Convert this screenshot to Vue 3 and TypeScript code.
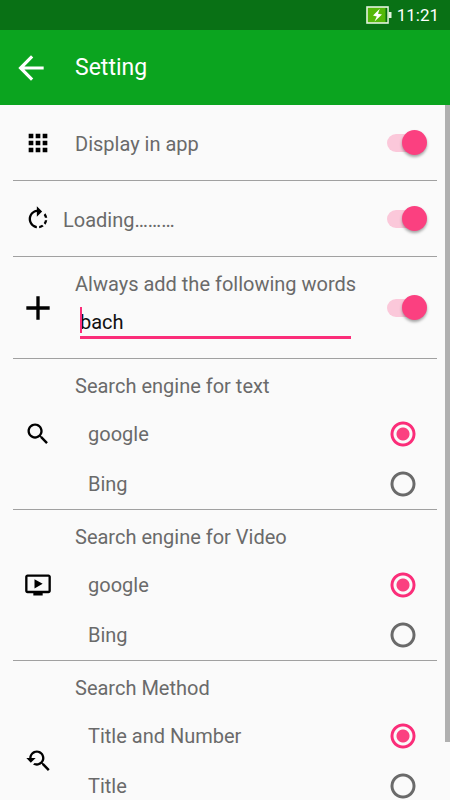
<script setup lang="ts">
import { reactive, ref } from 'vue'

interface Group {
  key: string
  title: string
  icon: string
  options: string[]
}

const ICONS = {
  apps: 'M4 8h4V4H4v4zm6 12h4v-4h-4v4zm-6 0h4v-4H4v4zm0-6h4v-4H4v4zm6 0h4v-4h-4v4zm6-10v4h4V4h-4zm-6 4h4V4h-4v4zm6 6h4v-4h-4v4zm0 6h4v-4h-4v4z',
  rotate:
    'M15.55 5.55L11 1v3.07C7.06 4.56 4 7.92 4 12s3.05 7.44 7 7.93v-2.02c-2.84-.48-5-2.94-5-5.91s2.16-5.43 5-5.91V10l4.55-4.45zM19.93 11c-.17-1.39-.72-2.73-1.62-3.89l-1.42 1.42c.54.75.88 1.6 1.02 2.47h2.02zM13 17.9v2.02c1.39-.17 2.74-.71 3.9-1.61l-1.44-1.44c-.75.54-1.59.89-2.46 1.03zm3.89-2.42l1.42 1.41c.9-1.16 1.45-2.5 1.62-3.89h-2.02c-.14.87-.48 1.72-1.02 2.48z',
  add: 'M19 13h-6v6h-2v-6H5v-2h6V5h2v6h6v2z',
  search:
    'M15.5 14h-.79l-.28-.27C15.41 12.59 16 11.11 16 9.5 16 5.91 13.09 3 9.5 3S3 5.91 3 9.5 5.91 16 9.5 16c1.61 0 3.09-.59 4.23-1.57l.27.28v.79l5 4.99L20.49 19l-4.99-5zm-6 0C7.01 14 5 11.99 5 9.5S7.01 5 9.5 5 14 7.01 14 9.5 11.99 14 9.5 14z',
  video:
    'M21 3H3c-1.11 0-2 .89-2 2v12c0 1.1.89 2 2 2h5v2h8v-2h5c1.1 0 1.99-.9 1.99-2L23 5c0-1.11-.9-2-2-2zm0 14H3V5h18v12zm-5-6l-7 4V7z',
  replay:
    'M17.01 14h-.8l-.27-.27c.98-1.14 1.57-2.61 1.57-4.23 0-3.59-2.91-6.5-6.5-6.5s-6.5 3-6.5 6.5H2l3.84 4 4.16-4H6.51C6.51 7 8.53 5 11.01 5s4.5 2.01 4.5 4.5c0 2.48-2.02 4.5-4.5 4.5-.65 0-1.26-.14-1.82-.38L7.71 15.1c.97.57 2.09.9 3.3.9 1.61 0 3.08-.59 4.22-1.57l.27.27v.79l5.01 4.99L22 19l-4.99-5z',
}

const groups: Group[] = [
  { key: 'text', title: 'Search engine for text', icon: ICONS.search, options: ['google', 'Bing'] },
  { key: 'video', title: 'Search engine for Video', icon: ICONS.video, options: ['google', 'Bing'] },
  { key: 'method', title: 'Search Method', icon: ICONS.replay, options: ['Title and Number', 'Title'] },
]

const selected = reactive<Record<string, string>>({
  text: 'google',
  video: 'google',
  method: 'Title and Number',
})

const displayInApp = ref(true)
const loading = ref(true)
const addWords = ref(true)
const words = ref('bach')
</script>

<template>
  <div class="screen">
    <div class="status">
      <svg class="battery" viewBox="0 0 26 18" aria-hidden="true">
        <rect x="1" y="1" width="21" height="16" fill="#55b80a" stroke="#e4f3e0" stroke-width="1.6" />
        <rect x="19.5" y="2" width="1.7" height="14" fill="#097115" />
        <rect x="22.5" y="6" width="3" height="6" fill="#e4f3e0" />
        <path d="M13.8 2.8 7 9.6l3.8.8-2.3 5L16 8.6l-4-.8z" fill="#fff" />
      </svg>
      <span>11:21</span>
    </div>
    <header class="bar">
      <button class="back" type="button" aria-label="Back">
        <svg viewBox="0 0 24 24"><path d="M20 11H7.83l5.59-5.59L12 4l-8 8 8 8 1.41-1.41L7.83 13H20v-2z" /></svg>
      </button>
      <h1>Setting</h1>
    </header>

    <main class="list">
      <section class="row">
        <div class="icon"><svg viewBox="0 0 24 24"><path :d="ICONS.apps" /></svg></div>
        <label class="label indent" for="display">Display in app</label>
        <input id="display" v-model="displayInApp" class="switch" type="checkbox" role="switch" />
      </section>

      <section class="row">
        <div class="icon"><svg viewBox="0 0 24 24"><path :d="ICONS.rotate" /></svg></div>
        <label class="label" for="loading">Loading………</label>
        <input id="loading" v-model="loading" class="switch" type="checkbox" role="switch" />
      </section>

      <section class="row words">
        <div class="icon large"><svg viewBox="0 0 24 24"><path :d="ICONS.add" /></svg></div>
        <div class="field indent">
          <label for="words">Always add the following words</label>
          <div class="entry">
            <input id="words" v-model="words" type="text" />
            <i class="caret"></i>
          </div>
        </div>
        <input v-model="addWords" class="switch" type="checkbox" role="switch" aria-label="Always add the following words" />
      </section>

      <section v-for="g in groups" :key="g.key" class="row group" :class="g.key">
        <div class="icon"><svg viewBox="0 0 24 24"><path :d="g.icon" /></svg></div>
        <fieldset>
          <legend>{{ g.title }}</legend>
          <label v-for="o in g.options" :key="o" class="option">
            <span>{{ o }}</span>
            <input v-model="selected[g.key]" type="radio" :name="g.key" :value="o" />
          </label>
        </fieldset>
      </section>
    </main>
    <div class="thumb"></div>
  </div>
</template>

<style>
body {
  margin: 0;
  background: #fafafa;
}
</style>

<style scoped>
* {
  box-sizing: border-box;
}
.screen {
  position: relative;
  height: 100vh;
  overflow: hidden;
  background: #fafafa;
  color: #6a6a6a;
  font-family: Roboto, 'Liberation Sans', sans-serif;
  font-size: 20px;
  line-height: 24px;
}
.status {
  display: flex;
  align-items: center;
  justify-content: flex-end;
  gap: 5px;
  height: 30px;
  padding-right: 11px;
  background: #097115;
  color: #fff;
  font-size: 17px;
}
.battery {
  width: 26px;
  height: 18px;
}
.bar {
  display: flex;
  align-items: center;
  height: 75px;
  padding-left: 12px;
  background: #0ba41f;
  color: #fff;
}
.back {
  width: 63px;
  height: 48px;
  padding: 0;
  border: 0;
  background: none;
  text-align: left;
}
.back svg {
  display: block;
  width: 38px;
  height: 38px;
  fill: #fff;
}
h1 {
  margin: 0;
  font-size: 23px;
  font-weight: 400;
}
.list {
  padding: 0 13px;
}
.row {
  display: flex;
  align-items: center;
  min-height: 76px;
  border-bottom: 1px solid #a0a0a0;
}
.icon {
  display: flex;
  flex: none;
  justify-content: center;
  width: 50px;
}
.icon svg {
  width: 28px;
  height: 28px;
  fill: #000;
}
.icon.large svg {
  width: 40px;
  height: 40px;
}
.label {
  flex: 1;
  padding-top: 3px;
}
.indent {
  margin-left: 12px;
}
.switch {
  position: relative;
  flex: none;
  width: 40px;
  height: 26px;
  margin: 0 10px 0 0;
  appearance: none;
}
.switch::before {
  content: '';
  position: absolute;
  inset: 4px 4px 4px 0;
  border-radius: 9px;
  background: #c4c4c4;
}
.switch::after {
  content: '';
  position: absolute;
  top: 0;
  left: 0;
  width: 25px;
  height: 25px;
  border-radius: 50%;
  background: #f1f1f1;
  box-shadow: 0 2px 3px rgba(0, 0, 0, 0.35);
}
.switch:checked::before {
  background: #fbc8da;
}
.switch:checked::after {
  left: 15px;
  background: #fb4080;
}
.words {
  min-height: 102px;
}
.field {
  display: flex;
  flex: 1;
  flex-direction: column;
  gap: 11px;
  padding: 12px 0 16px;
}
.entry {
  position: relative;
  margin: 0 36px 0 5px;
}
.entry input {
  display: block;
  width: 100%;
  height: 32px;
  padding: 0;
  border: 0;
  border-bottom: 3px solid #fb2d79;
  border-radius: 0;
  outline: 0;
  background: none;
  color: #111;
  font: inherit;
}
.caret {
  position: absolute;
  top: 0;
  left: 0;
  width: 2px;
  height: 26px;
  background: #fb2d79;
}
.group.method {
  min-height: 201px;
}
fieldset {
  flex: 1;
  align-self: flex-start;
  min-width: 0;
  margin: 0;
  padding: 0;
  border: 0;
}
legend {
  height: 50px;
  margin-left: 12px;
  padding: 3px 0 0;
  line-height: 48px;
}
.option {
  display: flex;
  align-items: center;
  justify-content: space-between;
  height: 50px;
  padding: 0 21px 0 25px;
}
.option input {
  width: 26px;
  height: 26px;
  margin: 0;
  border-radius: 50%;
  background: radial-gradient(circle, transparent 9px, #6a6a6a 10px 12px, transparent 13px);
  appearance: none;
}
.option input:checked {
  background: radial-gradient(circle, #fb4080 6px, transparent 7px 9px, #fb2d79 10px 12px, transparent 13px);
}
.thumb {
  position: absolute;
  top: 105px;
  right: 0;
  width: 5px;
  height: 637px;
  background: #b0b0b0;
}
</style>
